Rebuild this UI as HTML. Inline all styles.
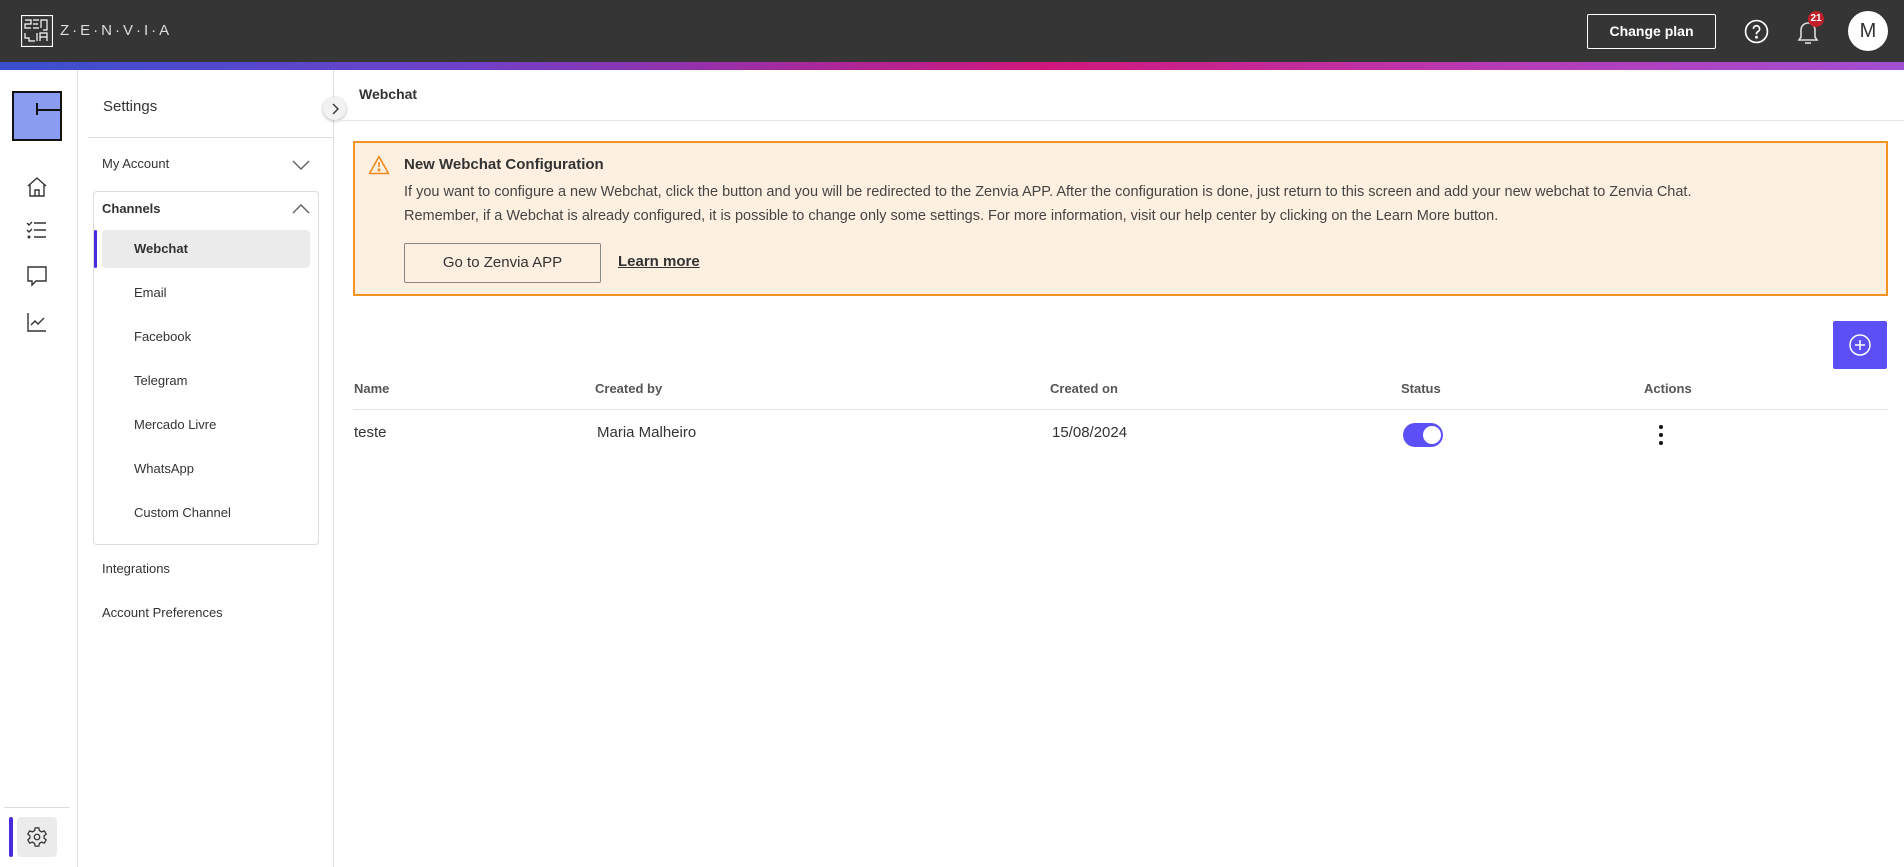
<!DOCTYPE html>
<html><head><meta charset="utf-8"><style>
*{box-sizing:border-box;margin:0;padding:0}
body{width:1904px;height:867px;overflow:hidden;font-family:"Liberation Sans",sans-serif;background:#fff;color:#333;position:relative}
.hdr{position:absolute;left:0;top:0;width:1904px;height:62px;background:#353535}
.grad{position:absolute;left:0;top:62px;width:1904px;height:8px;background:linear-gradient(90deg,#3a4fd0 0%,#7040c8 25%,#d0187c 55%,#b63cb8 80%,#a24ed2 100%)}
.a{position:absolute}
.rail{position:absolute;left:0;top:70px;width:78px;height:797px;border-right:1px solid #ddd}
.sp{position:absolute;left:78px;top:70px;width:256px;height:797px;border-right:1px solid #ddd}
.item{position:absolute;font-size:13px;color:#333}
.th{position:absolute;top:381px;font-size:13px;font-weight:bold;color:#555}
.td{position:absolute;top:424px;font-size:15px;color:#333}
</style></head><body>
<div class="hdr"></div><div class="grad"></div>
<svg class="a" style="left:21px;top:15px" width="32" height="32" viewBox="0 0 32 32" fill="none" stroke="#fff" stroke-width="1.2"><rect x="0.5" y="0.5" width="31" height="31"/><path d="M4 5h6v4H4v4h6M12 5h6M12 9h5M12 13h6M20 13V5h6v10h-4M4 18v5h4v3h6M16 18v8M19 26v-8h7v8M19 22h7"/></svg>
<div class="a" style="left:60px;top:22px;color:#ddd;font-size:15px;letter-spacing:3px">Z·E·N·V·I·A</div>
<div class="a" style="left:1587px;top:14px;width:129px;height:35px;border:1px solid #fff;border-radius:2px;color:#fff;font-weight:bold;font-size:14px;text-align:center;line-height:33px">Change plan</div>
<svg class="a" style="left:1744px;top:19px" width="25" height="25" viewBox="0 0 24 24" fill="none" stroke="#fff" stroke-width="1.6"><circle cx="12" cy="12" r="10.5"/><path d="M9 9.5a3 3 0 1 1 4 2.8c-.8.4-1 1-1 1.8v.6"/><circle cx="12" cy="17.5" r=".6" fill="#fff"/></svg>
<svg class="a" style="left:1795px;top:17px" width="26" height="30" viewBox="0 0 26 30" fill="none" stroke="#ddd" stroke-width="1.6"><path d="M4 23h18l-2-3v-7a7 7 0 0 0-14 0v7z"/><path d="M10 26h6"/></svg>
<div class="a" style="left:1808px;top:11px;width:16px;height:16px;border-radius:50%;background:#c0202a;color:#fff;font-size:10px;font-weight:bold;text-align:center;line-height:16px">21</div>
<div class="a" style="left:1848px;top:11px;width:40px;height:40px;border-radius:50%;background:#fff;color:#333;font-size:20px;text-align:center;line-height:40px">M</div>

<div class="rail">
<div class="a" style="left:12px;top:21px;width:50px;height:50px;background:#8a9cf0;border:2px solid #111"><div class="a" style="left:22px;top:10px;width:2px;height:12px;background:#111"></div><div class="a" style="left:22px;top:16px;width:26px;height:2px;background:#111"></div></div>
<svg class="a" style="left:25px;top:105px" width="24" height="24" viewBox="0 0 24 24" fill="none" stroke="#333" stroke-width="1.4"><path d="M3 11l9-8 9 8M5 9v12h14V9M10 21v-6h4v6"/></svg>
<svg class="a" style="left:25px;top:148px" width="24" height="24" viewBox="0 0 24 24" fill="none" stroke="#333" stroke-width="1.4"><path d="M9 5h12M9 12h12M9 19h12M2 5l2 2 3-3M2 12l2 2 3-3"/><circle cx="4" cy="19" r=".8" fill="#333"/></svg>
<svg class="a" style="left:25px;top:194px" width="24" height="24" viewBox="0 0 24 24" fill="none" stroke="#333" stroke-width="1.4"><path d="M3 3h18v14H11l-4 4v-4H3z"/></svg>
<svg class="a" style="left:25px;top:240px" width="24" height="24" viewBox="0 0 24 24" fill="none" stroke="#333" stroke-width="1.4"><path d="M3 3v18h18M6 15l4-4 3 3 6-6"/></svg>
<div class="a" style="left:4px;top:737px;width:65px;height:1px;background:#ddd"></div>
<div class="a" style="left:9px;top:747px;width:4px;height:40px;background:#4a2be0;border-radius:2px"></div>
<div class="a" style="left:17px;top:747px;width:40px;height:40px;background:#ebebeb;border-radius:4px"></div>
<svg class="a" style="left:26px;top:756px" width="22" height="22" viewBox="0 0 24 24" fill="none" stroke="#333" stroke-width="1.4"><circle cx="12" cy="12" r="3"/><path d="M10 2h4l.6 3 2.4 1.4 3-1 2 3.4-2.3 2v2.4l2.3 2-2 3.4-3-1L14.6 19l-.6 3h-4l-.6-3L7 17.6l-3 1-2-3.4 2.3-2v-2.4L2 8.8l2-3.4 3 1L9.4 5z"/></svg>
</div>

<div class="sp">
<div class="item" style="left:25px;top:28px;font-size:15px">Settings</div>
<div class="a" style="left:10px;top:67px;width:246px;height:1px;background:#ddd"></div>
<div class="item" style="left:24px;top:86px">My Account</div>
<svg class="a" style="left:214px;top:90px" width="18" height="10" viewBox="0 0 18 10" fill="none" stroke="#666" stroke-width="1.5"><path d="M1 1l8 8 8-8"/></svg>
<div class="a" style="left:15px;top:121px;width:226px;height:354px;border:1px solid #ddd;border-radius:4px"></div>
<div class="item" style="left:24px;top:131px;font-weight:bold">Channels</div>
<svg class="a" style="left:214px;top:134px" width="18" height="10" viewBox="0 0 18 10" fill="none" stroke="#666" stroke-width="1.5"><path d="M1 9l8-8 8 8"/></svg>
<div class="a" style="left:16px;top:160px;width:3px;height:38px;background:#4a2be0;border-radius:2px"></div>
<div class="a" style="left:24px;top:160px;width:208px;height:38px;background:#ebebeb;border-radius:4px"></div>
<div class="item" style="left:56px;top:171px;font-weight:bold">Webchat</div>
<div class="item" style="left:56px;top:215px">Email</div>
<div class="item" style="left:56px;top:259px">Facebook</div>
<div class="item" style="left:56px;top:303px">Telegram</div>
<div class="item" style="left:56px;top:347px">Mercado Livre</div>
<div class="item" style="left:56px;top:391px">WhatsApp</div>
<div class="item" style="left:56px;top:435px">Custom Channel</div>
<div class="item" style="left:24px;top:491px">Integrations</div>
<div class="item" style="left:24px;top:535px">Account Preferences</div>
</div>
<div class="a" style="left:323px;top:97px;width:23px;height:23px;border-radius:50%;background:#f2f2f2;box-shadow:0 1px 3px rgba(0,0,0,.3)"></div>
<svg class="a" style="left:331px;top:103px" width="8" height="12" viewBox="0 0 8 12" fill="none" stroke="#333" stroke-width="1.4"><path d="M2 1l5 5-5 5"/></svg>

<div class="a" style="left:359px;top:86px;font-size:14px;font-weight:bold;color:#333">Webchat</div>
<div class="a" style="left:334px;top:120px;width:1570px;height:1px;background:#e5e5e5"></div>
<div class="a" style="left:353px;top:141px;width:1535px;height:155px;background:#fdf0e1;border:2px solid #f39322"></div>
<svg class="a" style="left:368px;top:155px" width="22" height="20" viewBox="0 0 22 20" fill="none" stroke="#f08a1c" stroke-width="1.6"><path d="M11 1.5L20.5 18.5H1.5z" stroke-linejoin="round"/><path d="M11 7v5"/><circle cx="11" cy="15" r=".7" fill="#f08a1c"/></svg>
<div class="a" style="left:404px;top:156px;font-size:15px;font-weight:bold;color:#333">New Webchat Configuration</div>
<div class="a" style="left:404px;top:180px;font-size:14.5px;color:#444;line-height:24px;width:1470px">If you want to configure a new Webchat, click the button and you will be redirected to the Zenvia APP. After the configuration is done, just return to this screen and add your new webchat to Zenvia Chat.<br>Remember, if a Webchat is already configured, it is possible to change only some settings. For more information, visit our help center by clicking on the Learn More button.</div>
<div class="a" style="left:404px;top:243px;width:197px;height:40px;border:1px solid #888;border-radius:2px;font-size:15px;text-align:center;line-height:38px;color:#333">Go to Zenvia APP</div>
<div class="a" style="left:618px;top:253px;font-size:15px;font-weight:bold;text-decoration:underline;color:#333">Learn more</div>

<div class="a" style="left:1833px;top:321px;width:54px;height:48px;background:#5b4ff5;border-radius:2px"></div>
<svg class="a" style="left:1848px;top:333px" width="24" height="24" viewBox="0 0 24 24" fill="none" stroke="#fff" stroke-width="1.5"><circle cx="12" cy="12" r="10"/><path d="M12 7v10M7 12h10"/></svg>
<div class="th" style="left:354px">Name</div>
<div class="th" style="left:595px">Created by</div>
<div class="th" style="left:1050px">Created on</div>
<div class="th" style="left:1401px">Status</div>
<div class="th" style="left:1644px">Actions</div>
<div class="a" style="left:353px;top:409px;width:1535px;height:1px;background:#e3e3e3"></div>
<div class="td" style="left:354px">teste</div>
<div class="td" style="left:597px">Maria Malheiro</div>
<div class="td" style="left:1052px">15/08/2024</div>
<div class="a" style="left:1403px;top:423px;width:40px;height:24px;border-radius:12px;background:#5b4ff5"></div>
<div class="a" style="left:1423px;top:426px;width:18px;height:18px;border-radius:50%;background:#fff"></div>
<div class="a" style="left:1659px;top:425px;width:4px;height:4px;border-radius:50%;background:#111"></div>
<div class="a" style="left:1659px;top:433px;width:4px;height:4px;border-radius:50%;background:#111"></div>
<div class="a" style="left:1659px;top:441px;width:4px;height:4px;border-radius:50%;background:#111"></div>
</body></html>
